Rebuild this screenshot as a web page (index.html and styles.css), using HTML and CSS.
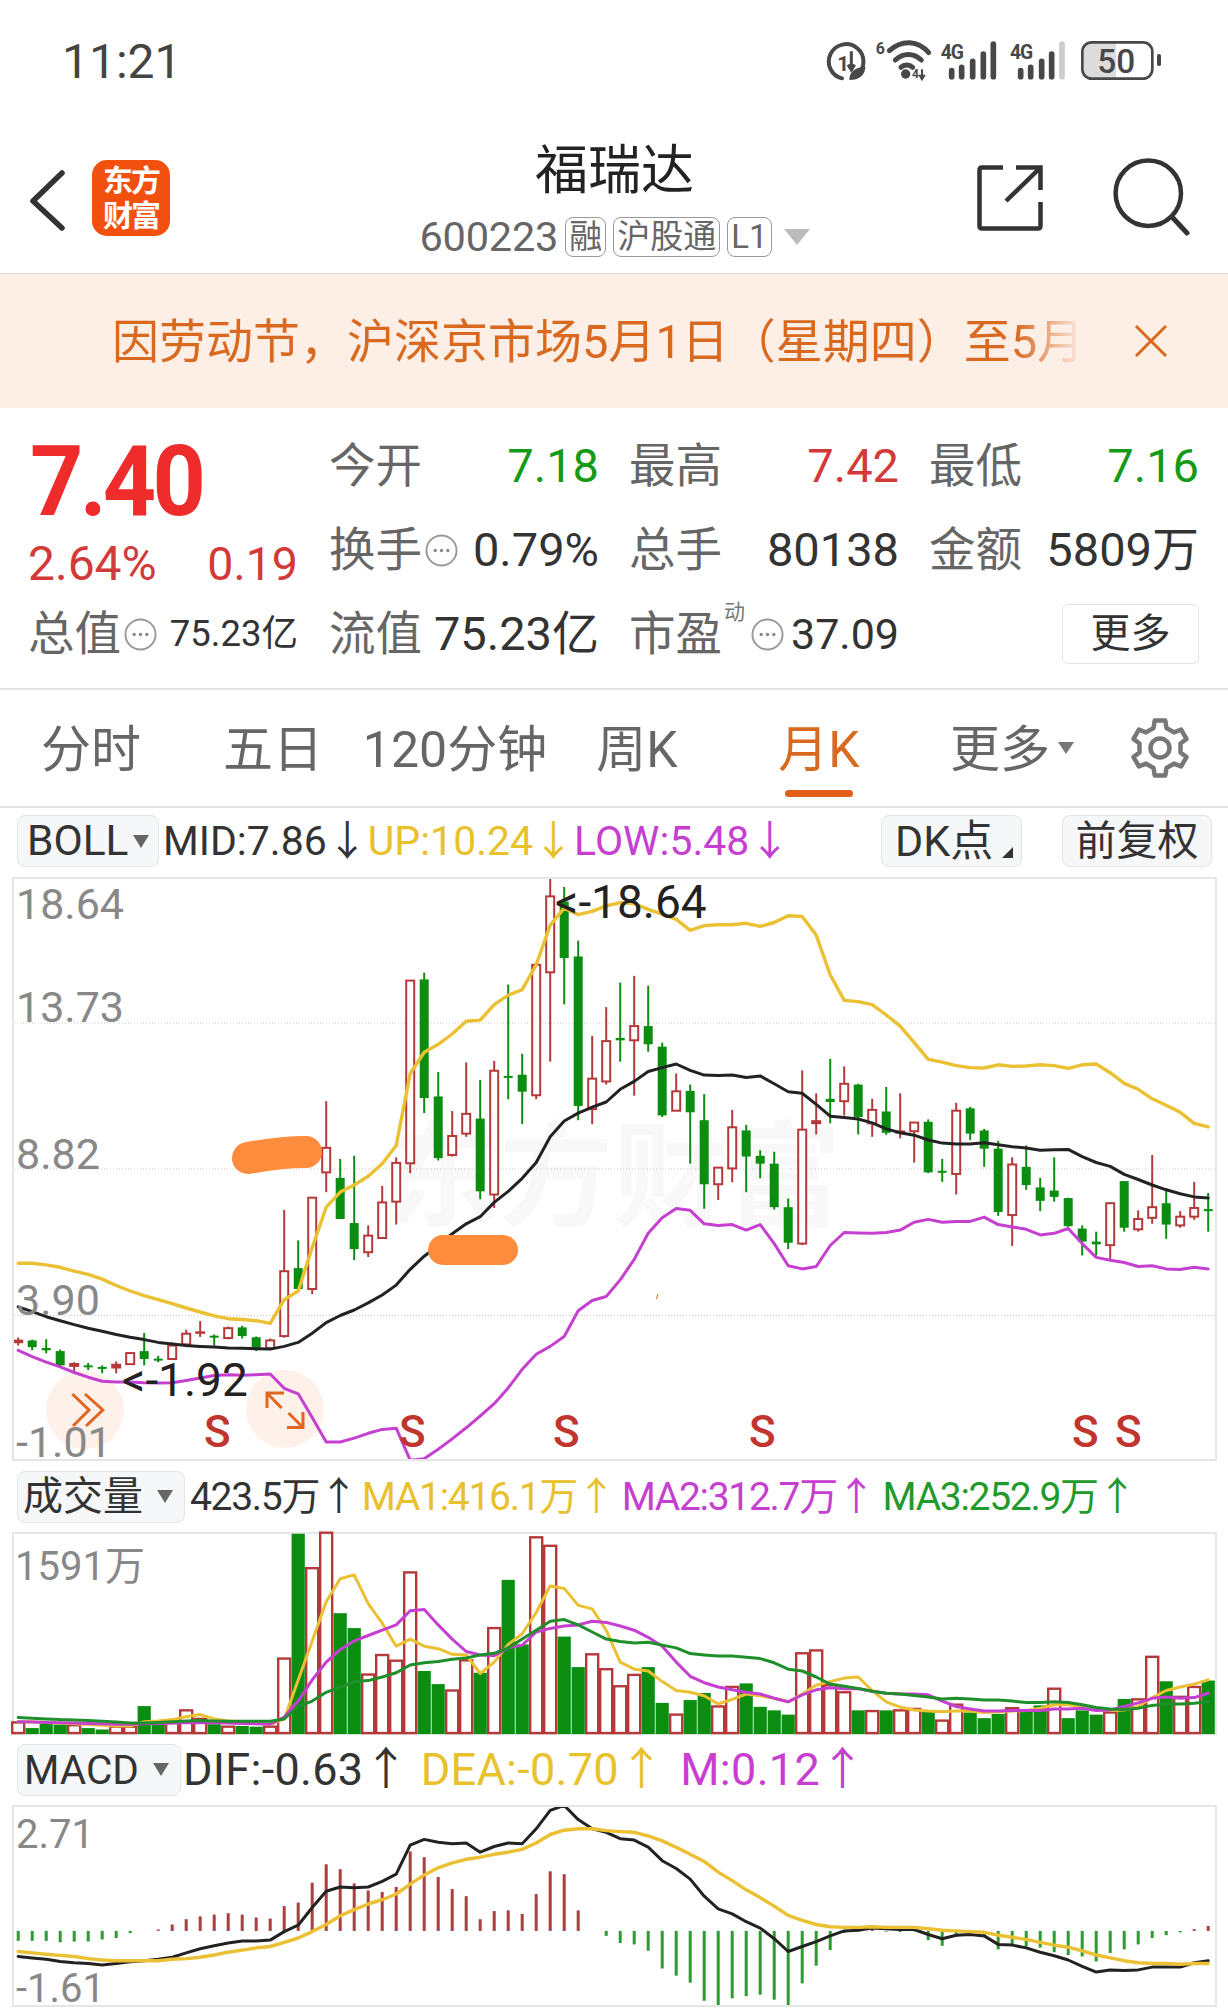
FILE: index.html
```html
<!DOCTYPE html>
<html lang="zh-CN">
<head>
<meta charset="utf-8">
<title>福瑞达</title>
<link rel="stylesheet" href="styles.css">
</head>
<body>
<svg class="defs" width="0" height="0" aria-hidden="true">
  <symbol id="info" viewBox="0 0 34 34">
    <circle cx="17" cy="17" r="15.5" fill="none" stroke="#999" stroke-width="2"/>
    <circle cx="10.5" cy="17" r="1.7" fill="#888"/><circle cx="17" cy="17" r="1.7" fill="#888"/><circle cx="23.5" cy="17" r="1.7" fill="#888"/>
  </symbol>
</svg>
<div class="page">
  <header class="status">
    <span class="clock">11:21</span>
    <svg class="status-icons" viewBox="0 0 1050 180" width="350" height="60">
      <path d="M111 135A52 52 0 1 0 66 145" fill="none" stroke="#484848" stroke-width="12" stroke-linecap="round"/>
      <text class="si si-1" x="52" y="122">1</text>
      <path d="M94 64V118M84 104L94 120L104 104" fill="none" stroke="#484848" stroke-width="9"/>
      <path d="M88 150C88 122 108 112 136 110C136 134 118 150 88 150Z" fill="#484848"/>
      <text class="si si-6" x="167" y="72">6</text>
      <path d="M208 62C245 28 295 30 326 68M226 90C250 68 280 68 304 90M243 112C252 103 268 103 278 112" fill="none" stroke="#484848" stroke-width="15" stroke-linecap="round"/>
      <circle cx="257" cy="132" r="14" fill="#484848"/>
      <text class="si si-tiny" x="276" y="145">4</text>
      <path d="M306 118V148M298 134L306 148L314 134" fill="none" stroke="#484848" stroke-width="6"/>
      <text class="si si-4g" x="362" y="88">4G</text>
      <path d="M395 122V140M425 112V140M458 94V140M490 72V140M520 42V140" fill="none" stroke="#484848" stroke-width="17" stroke-linecap="round"/>
      <text class="si si-4g" x="570" y="88">4G</text>
      <path d="M602 122V140M632 112V140M665 94V140M695 72V140" fill="none" stroke="#484848" stroke-width="17" stroke-linecap="round"/>
      <path d="M726 42V140" fill="none" stroke="#ccc" stroke-width="17" stroke-linecap="round"/>
      <path d="M815 37H888V146H815A28 28 0 0 1 787 118V65A28 28 0 0 1 815 37Z" fill="#dcdcdc"/>
      <rect x="787" y="37" width="210" height="109" rx="28" fill="none" stroke="#484848" stroke-width="8"/>
      <text class="si si-batt" x="832" y="128">50</text>
      <rect x="1011" y="72" width="12" height="36" rx="5" fill="#484848"/>
    </svg>
  </header>

  <nav class="nav">
    <div class="nav-left">
      <svg class="back" viewBox="0 0 40 64" width="40" height="64"><path d="M33 5L4 33L33 60" fill="none" stroke="#333" stroke-width="5.5" stroke-linecap="round" stroke-linejoin="round"/></svg>
      <div class="logo"><span>东方</span><span>财富</span></div>
    </div>
    <div class="nav-center">
      <div class="stock-name">福瑞达</div>
      <div class="stock-sub">
        <span class="code">600223</span>
        <span class="tag">融</span>
        <span class="tag">沪股通</span>
        <span class="tag">L1</span>
        <span class="tri-sub"></span>
      </div>
    </div>
    <div class="nav-right">
      <svg class="share" viewBox="0 0 66 66" width="66" height="66"><path d="M26 2.5H5Q2.5 2.5 2.5 5V61Q2.5 63.5 5 63.5H61Q63.5 63.5 63.5 61V37M39 2.5H63.5V25M29 36L63 3" fill="none" stroke="#333" stroke-width="4.5"/></svg>
      <svg viewBox="0 0 77 78" width="77" height="78"><circle cx="35.3" cy="35.3" r="32.7" fill="none" stroke="#333" stroke-width="4.5"/><path d="M60 60L74 75" fill="none" stroke="#333" stroke-width="5" stroke-linecap="round"/></svg>
    </div>
  </nav>

  <section class="notice">
    <div class="notice-text">因劳动节，沪深京市场5月1日（星期四）至5月</div>
    <svg viewBox="0 0 34 34" width="34" height="34"><path d="M2 2L32 32M32 2L2 32" stroke="#d9691f" stroke-width="3" fill="none"/></svg>
  </section>

  <section class="quote">
    <div class="q-left">
      <div class="price"><span class="price-num">7.40</span></div>
      <div class="change"><span>2.64%</span><span class="change-abs">0.19</span></div>
      <div class="cap"><span class="lbl">总值</span><svg class="info"><use href="#info"/></svg><span class="cap-val">75.23亿</span></div>
    </div>
    <div class="q-grid">
      <div class="stat"><span class="lbl">今开</span><span class="down">7.18</span></div>
      <div class="stat"><span class="lbl">最高</span><span class="up-val">7.42</span></div>
      <div class="stat"><span class="lbl">最低</span><span class="down">7.16</span></div>
      <div class="stat"><span class="lbl">换手</span><svg class="info"><use href="#info"/></svg><span class="val">0.79%</span></div>
      <div class="stat"><span class="lbl">总手</span><span class="val">80138</span></div>
      <div class="stat"><span class="lbl">金额</span><span class="val">5809万</span></div>
      <div class="stat"><span class="lbl">流值</span><span class="val">75.23亿</span></div>
      <div class="stat"><span class="lbl">市盈</span><sup class="dyn">动</sup><svg class="info"><use href="#info"/></svg><span class="val val-s">37.09</span></div>
      <div class="stat stat-end"><button class="more">更多</button></div>
    </div>
  </section>

  <div class="tabs">
    <div class="tab">分时</div>
    <div class="tab">五日</div>
    <div class="tab">120分钟</div>
    <div class="tab">周K</div>
    <div class="tab tab-on">月K<i class="tab-line"></i></div>
    <div class="tab tab-more">更多<i class="tri-tab"></i></div>
    <svg class="gear" viewBox="-32 -32 64 64" width="64" height="64"><path d="M-6.5-20-5.3-27.5H5.3L6.5-20 14-15.6 21.1-18.4 26.5-9.1 20.5-4.4V4.4L26.5 9.1 21.1 18.4 14 15.6 6.5 20 5.3 27.5H-5.3L-6.5 20-14 15.6-21.1 18.4-26.5 9.1-20.5 4.4V-4.4L-26.5-9.1-21.1-18.4-14-15.6Z" fill="none" stroke="#777" stroke-width="4.5" stroke-linejoin="round"/><circle r="9.5" fill="none" stroke="#777" stroke-width="4.5"/></svg>
  </div>

  <div class="head head-boll">
    <div class="chip chip-boll"><span>BOLL</span><i class="tri"></i></div>
    <span class="i-mid">MID:7.86↓</span>
    <span class="i-up">UP:10.24↓</span>
    <span class="i-low">LOW:5.48↓</span>
    <div class="chip chip-dk">DK点</div>
    <div class="chip chip-fq">前复权</div>
  </div>

  <div class="panel panel-main">
    <svg id="main" viewBox="14 879 1201 580" width="1201" height="580">
      <defs><clipPath id="clip-main"><rect x="14" y="879" width="1201" height="580"/></clipPath></defs>
      <text class="mark" x="385" y="1217">东方财富</text>
      <g id="main-plot" clip-path="url(#clip-main)"></g>
      <text class="axis" x="16" y="919">18.64</text>
      <text class="axis" x="16" y="1022">13.73</text>
      <text class="axis" x="16" y="1169">8.82</text>
      <text class="axis" x="16" y="1315">3.90</text>
      <text class="axis" x="16" y="1457">-1.01</text>
      <text class="peak" x="555" y="918">&lt;-18.64</text>
      <text class="peak" x="122" y="1396">&lt;-1.92</text>
      <text class="sig" x="204" y="1447">S</text>
      <text class="sig" x="399" y="1447">S</text>
      <text class="sig" x="553" y="1447">S</text>
      <text class="sig" x="749" y="1447">S</text>
      <text class="sig" x="1072" y="1447">S</text>
      <text class="sig" x="1115" y="1447">S</text>
    </svg>
  </div>

  <div class="head head-vol">
    <div class="chip chip-vol"><span>成交量</span><i class="tri"></i></div>
    <span class="i-mid">423.5万↑</span>
    <span class="i-up">MA1:416.1万↑</span>
    <span class="i-low">MA2:312.7万↑</span>
    <span class="i-ma3">MA3:252.9万↑</span>
  </div>

  <div class="panel panel-vol">
    <svg id="vol" viewBox="14 1534 1201 199" width="1201" height="199">
      <g id="vol-plot"></g>
      <text class="axis-s" x="15" y="1580">1591万</text>
    </svg>
  </div>

  <div class="head head-macd">
    <div class="chip chip-macd"><span>MACD</span><i class="tri"></i></div>
    <span class="i-mid">DIF:-0.63↑</span>
    <span class="i-up">DEA:-0.70↑</span>
    <span class="i-low">M:0.12↑</span>
  </div>

  <div class="panel panel-macd">
    <svg id="macd" viewBox="14 1807 1201 198" width="1201" height="198">
      <defs><clipPath id="clip-macd"><rect x="14" y="1807" width="1201" height="198"/></clipPath></defs>
      <g id="macd-plot" clip-path="url(#clip-macd)"></g>
      <text class="axis-s" x="16" y="1848">2.71</text>
      <text class="axis-s" x="16" y="2002">-1.61</text>
    </svg>
  </div>
</div>
<script src="chart.js"></script>
</body>
</html>
```
FILE: styles.css
```css
* { box-sizing: border-box; }
html, body { margin: 0; padding: 0; background: #fff; }
body { font-family: Roboto, "Noto Sans CJK SC", sans-serif; color: #333; }
.defs { position: absolute; }
.page { width: 1228px; height: 2016px; overflow: hidden; }

/* status bar */
.status { height: 115px; display: flex; justify-content: space-between; align-items: flex-start; padding: 30px 58px 0 62px; }
.clock { font-size: 48px; line-height: 64px; color: #444; }
.status-icons { display: block; margin: 0; }
.si { font-family: Roboto, sans-serif; fill: #484848; font-weight: 700; }
.si-1 { font-size: 62px; }
.si-6 { font-size: 48px; }
.si-tiny { font-size: 36px; }
.si-4g { font-size: 58px; letter-spacing: -3px; }
.si-batt { font-size: 100px; font-weight: 500; }

/* nav */
.nav { height: 159px; border-bottom: 1px solid #ddd; display: grid; grid-template-columns: 1fr auto 1fr; padding: 0 38px 0 39px; }
.nav-left { display: flex; align-items: flex-start; padding-top: 51px; gap: 23px; margin-left: -10px; }
.back { margin-top: 2px; }
.logo { width: 78px; height: 76px; margin-top: -6px; border-radius: 15px; background: #f2500f; color: #fff; font-weight: 700; font-size: 30px; line-height: 35px; display: flex; flex-direction: column; align-items: center; justify-content: center; letter-spacing: -2px; }
.nav-center { display: flex; flex-direction: column; align-items: center; }
.stock-name { font-size: 53px; line-height: 60px; margin-top: 26px; color: #222; }
.stock-sub { display: flex; align-items: center; gap: 7px; margin-top: 15px; }
.code { font-size: 41.5px; line-height: 42px; color: #666; letter-spacing: -0.2px; }
.tag { height: 40px; padding: 0 3px; border: 1px solid #999; border-radius: 8px; font-size: 33px; line-height: 38px; color: #666; }
.tri-sub { width: 0; height: 0; border-left: 13px solid transparent; border-right: 13px solid transparent; border-top: 16px solid #bbb; margin-left: 5px; }
.nav-right { display: flex; justify-content: flex-end; align-items: flex-start; padding-top: 43px; gap: 70px; }
.share { margin-top: 7px; }

/* notice */
.notice { height: 134px; background: #fdeee6; display: flex; align-items: center; padding: 0 60px 0 112px; justify-content: space-between; }
.notice-text { width: 972px; margin-bottom: 8px; white-space: nowrap; font-size: 47px; color: #d9691f; -webkit-mask-image: linear-gradient(to right, #000 93%, rgba(0,0,0,.12) 99%, transparent 100%); mask-image: linear-gradient(to right, #000 93%, rgba(0,0,0,.12) 99%, transparent 100%); }

/* quote */
.quote { height: 282px; border-bottom: 2px solid #e2e2e2; padding: 16px 29px 0 28px; display: flex; gap: 31px; font-size: 47px; }
.q-left { width: 270px; display: grid; grid-template-rows: 112px 56px 84px; }
.price { font-size: 99px; font-weight: 700; line-height: 115px; height: 112px; color: #ef2b2b; padding-left: 2px; }
.price-num { display: inline-block; letter-spacing: -4px; transform: scaleX(.94); transform-origin: left center; }
.change { display: flex; justify-content: space-between; align-items: center; color: #d23a3a; font-size: 48px; line-height: 56px; }
.change-abs { font-size: 46.5px; }
.cap { display: flex; align-items: center; }
.cap .info { margin-left: 3px; }
.cap-val { font-size: 36.5px; line-height: 50px; margin-left: auto; color: #333; }
.q-grid { flex: 1; display: grid; grid-template-columns: repeat(3, 270px); column-gap: 30px; grid-auto-rows: 84px; }
.stat { display: flex; align-items: center; justify-content: space-between; line-height: 60px; }
.stat-end { justify-content: flex-end; }
.lbl { flex: none; color: #666; font-size: 46.5px; line-height: 54px; margin-bottom: 1px; }
.val { color: #333; margin-left: auto; }
.val-s { font-size: 43px; }
.down { color: #159a15; }
.up-val { color: #d23a3a; }
.info { width: 33px; height: 33px; margin-left: 3px; flex: none; }
.dyn { flex: none; font-size: 21px; color: #777; align-self: flex-start; margin: 8px 3px 0 2px; line-height: 24px; vertical-align: baseline; }
.more { width: 137px; height: 60px; border: 1px solid #e4e4e4; border-radius: 6px; background: #fff; color: #333; font-family: inherit; font-size: 40px; line-height: 56px; padding: 0; }

/* tabs */
.tabs { height: 118px; border-bottom: 2px solid #e4e4e4; display: grid; grid-template-columns: repeat(6, 182px) 1fr; align-items: start; font-size: 50px; color: #666; }
.tab { display: flex; flex-direction: column; align-items: center; padding-top: 30px; line-height: 60px; height: 107px; white-space: nowrap; }
.tab-on { color: #d9691f; }
.tab-line { display: block; width: 68px; height: 7px; border-radius: 4px; background: #e0601a; margin-top: 10px; }
.tab-more { flex-direction: row; justify-content: center; align-items: flex-start; padding-left: 22px; gap: 8px; }
.tri-tab { width: 0; height: 0; border-left: 8px solid transparent; border-right: 8px solid transparent; border-top: 12px solid #777; margin-top: 22px; }
.gear { margin: 26px 0 0 36px; }

/* indicator heads */
.head { display: flex; align-items: center; font-size: 41px; line-height: 52px; white-space: nowrap; }
.head-boll { height: 52px; margin: 7px 0 10px; padding: 0 16px 0 17px; }
.head-vol { height: 51px; margin: 10px 0 10px 17px; font-size: 39px; letter-spacing: -1.3px; }
.head-macd { height: 51px; margin: 9px 0 10px 17px; font-size: 45px; letter-spacing: 0.3px; }
.chip { height: 52px; border: 1px solid #e4e4e4; border-radius: 8px; background: #f6f7f9; color: #333; display: flex; align-items: center; justify-content: space-between; font-size: 41px; letter-spacing: 0; }
.chip-boll { width: 142px; padding: 0 9px 0 9px; margin-right: 4px; font-size: 42.5px; }
.chip-dk { position: relative; width: 141px; margin-left: auto; padding-left: 13px; font-size: 43px; justify-content: flex-start; }
.chip-dk::after { content: ""; position: absolute; right: 8px; bottom: 8px; border-left: 11px solid transparent; border-bottom: 11px solid #333; }
.chip-fq { width: 150px; margin-left: 40px; justify-content: center; }
.chip-vol { width: 168px; padding: 0 11px 0 5px; margin-right: 5px; font-size: 40px; }
.chip-macd { width: 164px; padding: 0 11px 0 6px; margin-right: 2px; font-size: 40.5px; }
.tri { width: 0; height: 0; border-left: 8px solid transparent; border-right: 8px solid transparent; border-top: 13px solid #666; }
.i-mid { color: #333; }
.i-up { color: #e8c12c; }
.i-low { color: #c63fd0; }
.head-vol .i-up { margin-left: 5px; }
.head-vol .i-low { margin-left: 7px; }
.i-ma3 { color: #1f9a2c; margin-left: 8px; }
.head-macd .i-up { margin-left: 12px; }
.head-macd .i-low { margin-left: 16px; }

/* chart panels */
.panel { width: 1205px; margin-left: 12px; border: 2px solid #e6e6e6; }
.panel svg { display: block; overflow: visible; }
.panel-main { height: 584px; }
.panel-vol { height: 203px; border-bottom-width: 2px; }
.panel-macd { height: 202px; }
.mark { font-size: 114px; font-weight: 700; fill: #f8f8f8; font-family: "Noto Sans CJK SC", sans-serif; }
.axis { font-size: 43px; fill: #888; }
.axis-s { font-size: 40px; fill: #888; }
.peak { font-size: 46px; fill: #222; }
.sig { font-size: 44px; font-weight: 500; fill: #c2352f; }
```
FILE: chart.js
```js
// Draws the K-line, volume and MACD charts from their data series.
var NS = 'http://www.w3.org/2000/svg';
var RED = '#b5393b', GREEN = '#0b8e10', YELLOW = '#ebc033', PURPLE = '#c53fd0', BLACK = '#222222';
function X(i) { return 18.2 + 14 * i; }
function el(parent, name, attrs) {
  var e = document.createElementNS(NS, name);
  for (var k in attrs) e.setAttribute(k, attrs[k]);
  parent.appendChild(e);
  return e;
}
function line(parent, data, toY, color, width) {
  var pts = data.map(function (v, i) { return X(i).toFixed(1) + ',' + toY(v).toFixed(1); }).join(' ');
  el(parent, 'polyline', { points: pts, fill: 'none', stroke: color, 'stroke-width': width, 'stroke-linejoin': 'round', 'stroke-linecap': 'round' });
}

// ---- main chart: y values are sampled on a 2.529x scale above y=860
var mY = function (z) { return 860 + z / 2.529; };
var candles = [
['r',1208,1213,1222,1228],['g',1213,1215,1232,1240],['g',1212,1234,1240,1248],['g',1238,1242,1278,1284],
['r',1270,1272,1282,1298],['g',1272,1278,1282,1290],['g',1278,1282,1284,1298],['r',1268,1274,1286,1298],
['r',1245,1247,1275,1277],['g',1196,1242,1262,1278],['g',1254,1261,1264,1270],['r',1220,1228,1262,1264],
['r',1188,1198,1225,1232],['r',1166,1192,1197,1206],['g',1200,1203,1206,1228],['r',1180,1184,1209,1212],
['g',1178,1182,1204,1210],['g',1205,1207,1235,1242],['r',1210,1215,1235,1238],['r',885,1040,1204,1208],
['g',962,1032,1085,1092],['r',852,854,1085,1098],['r',610,728,790,840],['g',756,804,908,908],
['g',748,918,984,1012],['r',924,950,992,1004],['r',824,866,956,958],['r',752,766,864,922],
['r',305,305,767,792],['g',285,302,602,640],['g',536,598,754,760],['r',635,698,746,750],
['r',512,642,692,700],['g',556,654,838,858],['r',508,533,846,880],['g',315,546,550,605],
['g',490,543,586,668],['r',265,265,595,605],['r',44,92,284,510],['g',68,105,248,365],
['g',204,244,622,658],['r',445,553,630,668],['r',372,458,560,568],['g',310,450,456,510],
['r',293,420,456,596],['g',318,420,466,485],['g',462,472,646,650],['r',540,585,634,634],
['g',568,584,638,768],['g',592,658,820,882],['r',778,778,820,860],['r',632,676,780,815],
['g',670,684,750,840],['g',734,748,768,805],['g',738,768,878,884],['g',856,878,968,984],
['r',532,682,970,974],['r',590,658,668,694],['g',503,604,612,666],['r',522,566,610,646],
['g',566,568,650,694],['r',604,632,666,700],['g',574,636,690,695],['r',590,684,692,704],
['r',664,664,686,765],['g',656,662,790,792],['g',756,786,790,814],['r',614,634,794,846],
['g',624,628,692,708],['g',680,684,730,776],['g',710,730,890,900],['r',752,770,898,976],
['g',722,776,822,834],['g',804,828,862,888],['g',752,836,852,864],['g',854,855,926,928],
['g',924,932,965,1000],['g',940,965,972,1000],['r',866,868,974,1010],['g',812,812,930,940],
['r',886,908,934,940],['r',746,878,905,920],['g',830,868,922,958],['r',888,902,924,930],
['r',814,880,902,910],['g',842,883,886,940]
];
var upper = [1020,1020,1024,1030,1040,1048,1060,1076,1090,1102,1112,1122,1133,1143,1153,1160,1162,1165,1172,1112,1090,980,878,840,822,800,768,722,540,486,466,440,408,405,366,342,328,265,165,122,138,130,116,108,110,125,137,150,178,166,164,164,160,168,158,141,143,190,290,355,358,366,392,420,462,504,511,520,525,526,518,522,521,518,520,527,518,516,538,565,580,604,620,638,666,675];
var mid = [1130,1142,1155,1165,1175,1184,1192,1200,1207,1213,1220,1224,1228,1230,1232,1234,1235,1236,1237,1230,1220,1197,1170,1152,1138,1120,1100,1075,1035,1002,975,945,920,902,866,838,805,765,700,660,640,625,612,580,560,535,525,516,532,544,545,544,550,546,566,586,590,618,648,651,655,665,680,690,696,708,716,718,718,715,720,725,728,734,733,732,750,765,775,795,808,822,834,844,852,855];
var lower = [1240,1256,1270,1282,1296,1308,1318,1320,1320,1322,1323,1322,1316,1310,1304,1302,1303,1302,1300,1336,1350,1410,1472,1472,1462,1450,1440,1437,1518,1514,1490,1464,1436,1406,1375,1335,1288,1250,1230,1205,1140,1114,1104,1062,1010,944,905,881,886,920,924,922,936,922,970,1026,1034,1028,975,942,943,944,942,936,916,909,916,914,914,903,922,928,934,948,944,932,970,1005,1012,1018,1028,1026,1034,1036,1030,1034];

var mp = document.getElementById('main-plot');
[1023, 1169, 1315.5].forEach(function (y) {
  el(mp, 'line', { x1: 14, x2: 1215, y1: y, y2: y, stroke: '#c8c8c8', 'stroke-width': 1, 'stroke-dasharray': '1 2' });
});
[[85, 1410], [285, 1409]].forEach(function (c) {
  el(mp, 'circle', { cx: c[0], cy: c[1], r: 39, fill: '#fdf1ea' });
});
el(mp, 'path', { d: 'M72.4 1394L89 1410L73 1426M85 1394L102.8 1410L86 1426', fill: 'none', stroke: '#e0651e', 'stroke-width': 3 });
el(mp, 'path', { d: 'M267 1408V1393H284M267 1393L281.5 1408M287 1427.5H303V1412M303 1427.5L288.6 1413', fill: 'none', stroke: '#e0651e', 'stroke-width': 3 });

candles.forEach(function (c, i) {
  var x = X(i), col = c[0] === 'r' ? RED : GREEN;
  var top = mY(c[2]), bot = mY(c[3]);
  el(mp, 'line', { x1: x, x2: x, y1: mY(c[1]), y2: mY(c[4]), stroke: col, 'stroke-width': 2 });
  if (c[0] === 'r') {
    var h = bot - top;
    if (h < 5) {
      el(mp, 'rect', { x: x - 5, y: top, width: 10, height: Math.max(h, 2.5), fill: col });
    } else {
      el(mp, 'rect', { x: x - 4, y: top, width: 8, height: h, fill: '#fff', stroke: col, 'stroke-width': 2 });
    }
  } else {
    el(mp, 'rect', { x: x - 4.5, y: top, width: 9, height: Math.max(bot - top, 2), fill: col });
  }
});
line(mp, upper, mY, YELLOW, 3.4);
line(mp, mid, mY, BLACK, 3);
line(mp, lower, mY, PURPLE, 3);
el(mp, 'path', { d: 'M248 1158Q280 1152 306 1152', fill: 'none', stroke: '#ff8c3c', 'stroke-width': 32, 'stroke-linecap': 'round' });
el(mp, 'path', { d: 'M443 1250H503', fill: 'none', stroke: '#ff8c3c', 'stroke-width': 30, 'stroke-linecap': 'round' });
el(mp, 'path', { d: 'M658 1294L656.5 1299', fill: 'none', stroke: '#e0651e', 'stroke-width': 1 });

// ---- lower charts: y values are sampled on a 2.82x scale above y=1460
var lY = function (z) { return 1460 + z / 2.82; };
var volume = [['r',740],['g',756],['g',744],['g',746],['r',748],['g',756],['g',760],['r',752],['r',752],['g',694],['g',742],['r',742],['r',706],['r',730],['g',745],['r',752],['g',750],['g',752],['r',752],['r',560],['g',208],['r',305],['r',205],['g',432],['g',474],['r',605],['r',550],['r',566],['r',317],['g',595],['g',632],['r',650],['r',565],['g',600],['r',474],['g',338],['g',520],['r',218],['r',242],['g',498],['g',584],['r',548],['r',590],['r',638],['r',606],['g',584],['g',685],['r',718],['g',677],['g',657],['r',695],['r',640],['g',630],['g',696],['g',706],['g',718],['r',545],['r',537],['r',635],['r',655],['g',706],['r',708],['g',706],['r',706],['r',702],['g',710],['r',735],['r',690],['g',712],['g',728],['g',716],['r',700],['g',710],['g',692],['r',645],['g',728],['g',706],['g',718],['r',712],['g',674],['r',675],['r',555],['g',624],['r',668],['r',640],['g',622]];
var ma1 = [738,738,740,742,744,746,748,750,750,738,736,732,724,718,730,736,738,742,746,730,620,510,400,335,324,405,460,525,505,525,532,548,550,602,570,520,490,430,355,362,410,420,480,570,590,595,625,650,655,665,688,675,660,665,672,682,660,635,625,615,612,650,682,697,705,708,710,708,708,712,710,708,706,700,690,690,695,702,706,705,695,670,650,640,632,620];
var ma2 = [738,739,740,741,742,743,744,745,745,744,743,742,741,740,741,742,743,744,745,725,680,620,570,535,510,495,480,465,425,422,465,505,540,550,552,530,522,485,475,468,465,455,458,468,480,500,525,570,610,628,640,648,655,660,672,682,662,648,642,645,645,652,658,660,660,662,680,695,702,708,708,706,706,706,702,702,700,706,705,695,685,672,668,672,670,658];
var ma3 = [726,728,730,732,733,735,737,739,742,742,740,738,736,735,736,737,737,737,737,730,695,680,655,640,625,622,612,600,578,572,568,562,558,550,545,530,505,480,455,450,465,485,505,512,516,514,522,530,546,550,553,553,556,560,572,590,595,612,632,638,644,652,658,660,664,668,674,672,674,677,677,680,684,684,682,684,690,698,702,704,700,692,688,688,686,682];

var vp = document.getElementById('vol-plot');
var base = lY(770);
volume.forEach(function (b, i) {
  var x = X(i), top = lY(b[1]);
  if (b[0] === 'r') {
    el(vp, 'rect', { x: x - 6, y: top, width: 12, height: base - top, fill: '#fff', stroke: RED, 'stroke-width': 2.4 });
  } else {
    el(vp, 'rect', { x: x - 6.6, y: top, width: 13.2, height: base - top + 1, fill: GREEN });
  }
});
line(vp, ma1, lY, YELLOW, 3);
line(vp, ma2, lY, PURPLE, 3);
line(vp, ma3, lY, '#1e8f2a', 3);

var bars = [1356,1356,1356,1360,1358,1358,1352,1348,1334,1328,1324,1310,1295,1287,1282,1278,1282,1290,1293,1258,1248,1192,1140,1154,1194,1214,1218,1204,1104,1120,1176,1210,1230,1295,1272,1270,1280,1224,1160,1168,1270,1328,1342,1362,1366,1384,1434,1454,1474,1525,1542,1518,1512,1508,1522,1538,1476,1426,1382,1334,1330,1322,1330,1331,1329,1354,1370,1344,1342,1340,1380,1365,1372,1375,1388,1396,1400,1414,1390,1380,1366,1348,1340,1332,1323,1314];
var dif = [1400,1404,1408,1414,1418,1420,1424,1420,1415,1412,1408,1402,1390,1378,1370,1362,1356,1356,1354,1330,1312,1262,1216,1204,1206,1204,1188,1168,1086,1070,1078,1082,1080,1106,1090,1080,1082,1040,988,974,1014,1040,1050,1068,1072,1092,1130,1152,1182,1230,1266,1280,1302,1320,1350,1386,1372,1358,1342,1328,1326,1320,1322,1324,1324,1338,1350,1340,1338,1342,1366,1368,1376,1388,1398,1410,1428,1444,1438,1440,1438,1430,1430,1430,1418,1412];
var dea = [1386,1390,1394,1397,1400,1406,1410,1412,1412,1412,1412,1408,1406,1402,1396,1388,1382,1376,1372,1360,1348,1330,1310,1285,1268,1252,1240,1224,1196,1170,1150,1136,1126,1120,1112,1106,1098,1080,1056,1044,1040,1040,1045,1048,1050,1060,1074,1092,1112,1132,1162,1186,1212,1234,1258,1284,1298,1310,1316,1318,1318,1316,1318,1318,1318,1322,1326,1328,1330,1332,1340,1346,1352,1360,1368,1374,1384,1396,1404,1412,1418,1420,1420,1422,1420,1420];

var dp = document.getElementById('macd-plot');
var zero = lY(1328);
bars.forEach(function (v, i) {
  if (v === 1328) return;
  el(dp, 'line', { x1: X(i), x2: X(i), y1: zero, y2: lY(v), stroke: v < 1328 ? '#a8403f' : '#2e9a30', 'stroke-width': 3 });
});
line(dp, dif, lY, BLACK, 3);
line(dp, dea, lY, YELLOW, 3.4);
```
